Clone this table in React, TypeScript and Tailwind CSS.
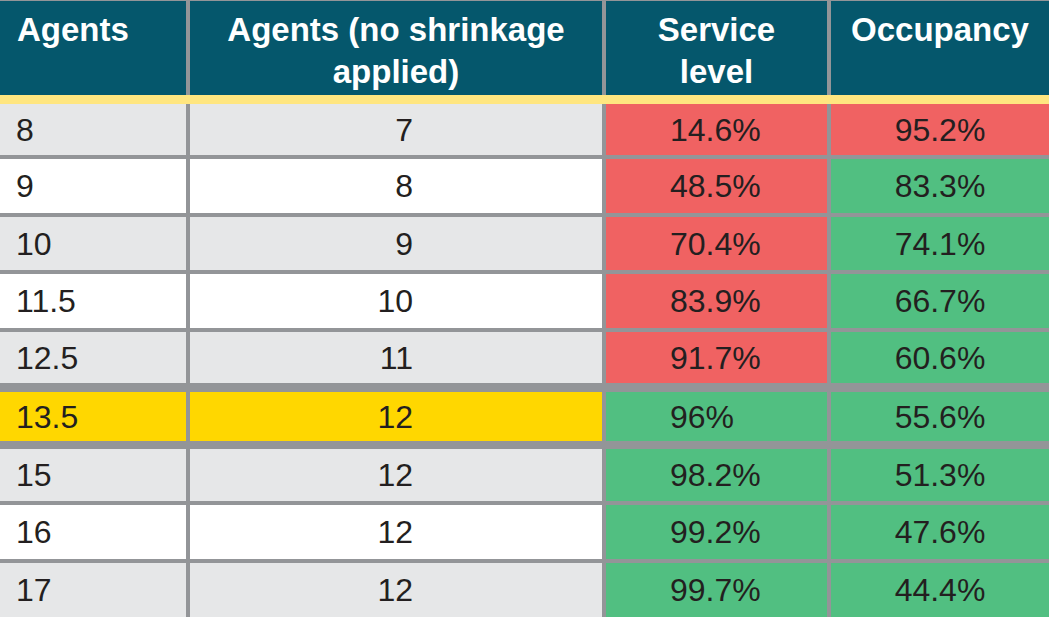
const rows = [
  { agents: "8", raw: "7", sl: "14.6%", occ: "95.2%", h: "h-[51px]", gap: "" },
  { agents: "9", raw: "8", sl: "48.5%", occ: "83.3%", h: "h-[54px]", gap: "mt-[4px]" },
  { agents: "10", raw: "9", sl: "70.4%", occ: "74.1%", h: "h-[53px]", gap: "mt-[4px]" },
  { agents: "11.5", raw: "10", sl: "83.9%", occ: "66.7%", h: "h-[54px]", gap: "mt-[4px]" },
  { agents: "12.5", raw: "11", sl: "91.7%", occ: "60.6%", h: "h-[51px]", gap: "mt-[4px]" },
  { agents: "13.5", raw: "12", sl: "96%", occ: "55.6%", h: "h-[49px]", gap: "mt-[9px]" },
  { agents: "15", raw: "12", sl: "98.2%", occ: "51.3%", h: "h-[52px]", gap: "mt-[8px]" },
  { agents: "16", raw: "12", sl: "99.2%", occ: "47.6%", h: "h-[54px]", gap: "mt-[4px]" },
  { agents: "17", raw: "12", sl: "99.7%", occ: "44.4%", h: "h-[54px]", gap: "mt-[4px]" },
];

const RED = "bg-[#f06262]";
const GREEN = "bg-[#51bf81]";

export default function App() {
  return (
    <div className="w-[1049px] h-[619px] bg-white font-['Liberation_Sans',Arial,sans-serif] text-[#231f20]">
      <div className="flex flex-col bg-[#939598] pt-px">
        {/* header */}
        <div className="flex gap-[4px] h-[94px] text-white font-bold text-[33px] leading-[42px]">
          <div className="w-[186px] bg-[#05576c] pl-[17px] pt-[8px]">Agents</div>
          <div className="w-[412px] bg-[#05576c] pt-[8px] text-center">
            Agents (no shrinkage
            <br />
            applied)
          </div>
          <div className="w-[221px] bg-[#05576c] pt-[8px] text-center">
            Service
            <br />
            level
          </div>
          <div className="w-[218px] bg-[#05576c] pt-[8px] text-center">Occupancy</div>
        </div>
        <div className="h-[9px] bg-[#ffe680]" />

        {rows.map((r, i) => {
          const highlight = i === 5;
          const base = highlight ? "bg-[#ffd700]" : i % 2 === 0 ? "bg-[#e6e7e8]" : "bg-white";
          const sl = i < 5 ? RED : GREEN;
          const occ = i === 0 ? RED : GREEN;
          return (
            <div key={r.agents} className={`flex gap-[4px] text-[32px] ${r.h} ${r.gap}`}>
              <div className={`w-[186px] ${base} flex items-center pl-4`}>{r.agents}</div>
              <div className={`w-[412px] ${base} flex items-center justify-end pr-[189px]`}>
                {r.raw}
              </div>
              <div className={`w-[221px] ${sl} flex items-center pl-[64px]`}>{r.sl}</div>
              <div className={`w-[218px] ${occ} flex items-center justify-center`}>{r.occ}</div>
            </div>
          );
        })}
      </div>
    </div>
  );
}
